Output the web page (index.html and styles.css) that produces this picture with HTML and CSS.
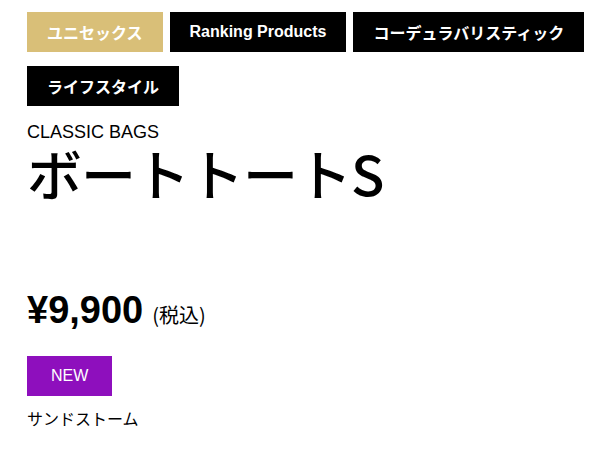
FILE: index.html
```html
<!DOCTYPE html>
<html lang="ja">
<head>
<meta charset="utf-8">
<title>ボートトートS</title>
<link rel="stylesheet" href="styles.css">
</head>
<body>
<div class="page">
  <ul class="tags">
    <li class="tag tag-gold">ユニセックス</li>
    <li class="tag tag-latin">Ranking Products</li>
    <li class="tag">コーデュラバリスティック</li>
    <li class="tag">ライフスタイル</li>
  </ul>
  <p class="series">CLASSIC BAGS</p>
  <h1 class="title">ボートトートS</h1>
  <p class="price"><span class="price-num">¥9,900</span><span class="tax">(税込)</span></p>
  <span class="badge-new">NEW</span>
  <p class="color">サンドストーム</p>
</div>
</body>
</html>
```

FILE: styles.css
```css
* { box-sizing: border-box; }
html, body { margin: 0; padding: 0; background: #fff; }
body {
  font-family: "Liberation Sans", "Noto Sans CJK JP", sans-serif;
  color: #000;
}
.page {
  padding: 12px 10px 12px 27px;
}
.tags {
  list-style: none;
  margin: 0;
  padding: 0;
  display: flex;
  flex-wrap: wrap;
  gap: 14px 7px;
}
.tag {
  display: block;
  height: 40px;
  line-height: 40px;
  padding: 0 20px;
  background: #000;
  color: #fff;
  font-family: "Noto Sans CJK JP", sans-serif;
  font-weight: 700;
  font-size: 16px;
}
.tag-gold { background: #d9bf78; }
.tag-latin {
  font-family: "Liberation Sans", sans-serif;
  font-size: 16px;
}
.series {
  margin: 16px 0 0;
  font-size: 18px;
  line-height: 20px;
}
.title {
  margin: 0;
  font-family: "Noto Sans CJK JP", sans-serif;
  font-weight: 500;
  font-size: 55px;
  line-height: 60px;
  letter-spacing: -1px;
}
.price {
  margin: 86px 0 0;
  line-height: 44px;
}
.price-num {
  font-size: 38px;
  font-weight: 700;
}
.tax {
  margin-left: 9px;
  font-family: "Noto Sans CJK JP", sans-serif;
  font-size: 20px;
}
.badge-new {
  display: inline-block;
  margin-top: 16px;
  height: 40px;
  line-height: 40px;
  padding: 0 24px;
  background: #8e0fbd;
  color: #fff;
  font-size: 16px;
}
.color {
  margin: 10px 0 0;
  font-family: "Noto Sans CJK JP", sans-serif;
  font-size: 16px;
  line-height: 24px;
}
```
